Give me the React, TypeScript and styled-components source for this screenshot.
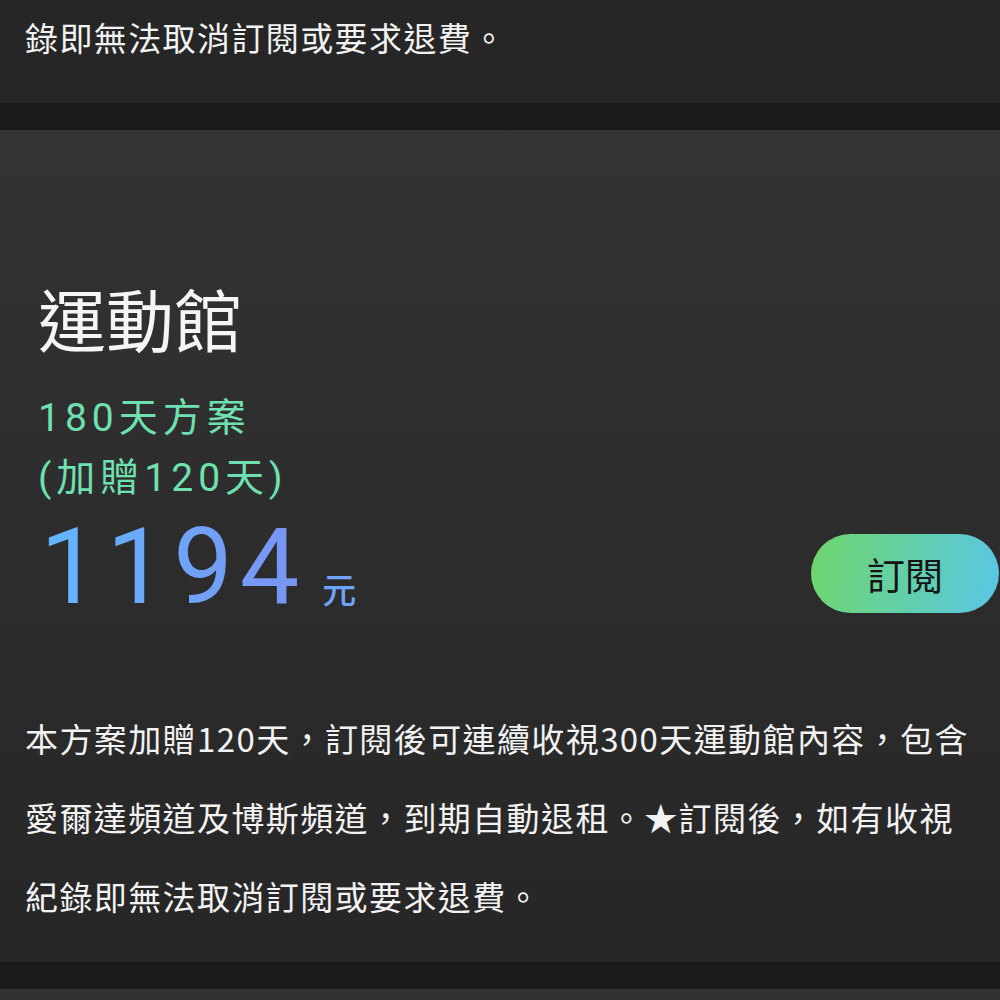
import styled, { createGlobalStyle } from "styled-components";

const GlobalStyle = createGlobalStyle`
  html, body {
    margin: 0;
    padding: 0;
    background: #1a1a1a;
  }
  body {
    font-family: "Noto Sans CJK TC", "Noto Sans", sans-serif;
    color: #f2f2f2;
    overflow: hidden;
  }
`;

const List = styled.div`
  display: flex;
  flex-direction: column;
  gap: 27px;
  width: 1000px;
`;

const Card = styled.section<{ $top?: number }>`
  background: linear-gradient(180deg, #333333 0%, #262626 100%);
  padding: ${(p) => p.$top ?? 0}px 0 26px;
`;

const PrevCard = styled(Card)`
  margin-top: -2px;
  background: #262626;
`;

const Header = styled.div`
  padding-left: 38px;
`;

const Title = styled.h2`
  margin: 0;
  font-size: 68px;
  font-weight: 400;
  line-height: 79px;
  color: #f5f5f5;
`;

const Plan = styled.div`
  margin-top: 31px;
  font-size: 39px;
  line-height: 60px;
  letter-spacing: 5px;
  color: #6fe0b0;
  font-family: Roboto, "Noto Sans CJK TC", sans-serif;
`;

const PriceRow = styled.div`
  margin-top: 7px;
  display: flex;
  align-items: center;
  justify-content: space-between;
`;

const Price = styled.div`
  display: flex;
  align-items: baseline;
  gap: 16px;
  padding-left: 2px;
`;

const Amount = styled.span`
  font-family: Roboto, "Noto Sans", sans-serif;
  font-size: 106px;
  line-height: 105px;
  letter-spacing: 7px;
  background: linear-gradient(90deg, #62b6ff 0%, #7a93f2 100%);
  -webkit-background-clip: text;
  background-clip: text;
  color: transparent;
`;

const Unit = styled.span`
  font-size: 34px;
  font-weight: 500;
  color: #6ea4f7;
`;

const SubscribeButton = styled.button`
  margin: 11px 1px 0 0;
  width: 188px;
  height: 79px;
  border: none;
  border-radius: 40px;
  background: linear-gradient(100deg, #6fd66c 0%, #63cfa8 50%, #59c6e6 100%);
  color: #141414;
  font-family: "Noto Sans CJK TC", sans-serif;
  font-size: 38px;
  cursor: pointer;
`;

const Description = styled.p<{ $gap?: number }>`
  margin: ${(p) => p.$gap ?? 0}px 0 0;
  padding: 0 0 0 25px;
  font-size: 33px;
  letter-spacing: 1.4px;
  line-height: 79px;
  color: #f2f2f2;
  white-space: nowrap;
`;

export default function App() {
  return (
    <>
      <GlobalStyle />
      <List>
        <PrevCard>
          <Description>錄即無法取消訂閱或要求退費。</Description>
        </PrevCard>
        <Card $top={148}>
          <Header>
            <Title>運動館</Title>
            <Plan>
              180天方案
              <br />
              (加贈120天)
            </Plan>
          </Header>
          <PriceRow>
            <Header>
              <Price>
                <Amount>1194</Amount>
                <Unit>元</Unit>
              </Price>
            </Header>
            <SubscribeButton>訂閱</SubscribeButton>
          </PriceRow>
          <Description $gap={79}>
            本方案加贈120天，訂閱後可連續收視300天運動館內容，包含
            <br />
            愛爾達頻道及博斯頻道，到期自動退租。★訂閱後，如有收視
            <br />
            紀錄即無法取消訂閱或要求退費。
          </Description>
        </Card>
        <Card $top={40} />
      </List>
    </>
  );
}
